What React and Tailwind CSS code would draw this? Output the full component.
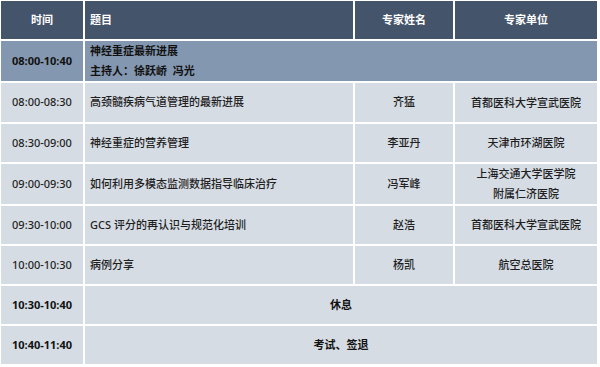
import { Fragment } from "react";

const rows = [
  { time: "08:00-08:30", topic: "高颈髓疾病气道管理的最新进展", name: "齐猛", unit: ["首都医科大学宣武医院"], h: "h-[39px]" },
  { time: "08:30-09:00", topic: "神经重症的营养管理", name: "李亚丹", unit: ["天津市环湖医院"], h: "h-[38px]" },
  { time: "09:00-09:30", topic: "如何利用多模态监测数据指导临床治疗", name: "冯军峰", unit: ["上海交通大学医学院", "附属仁济医院"], h: "h-[40px]" },
  { time: "09:30-10:00", topic: "GCS 评分的再认识与规范化培训", name: "赵浩", unit: ["首都医科大学宣武医院"], h: "h-[38px]" },
  { time: "10:00-10:30", topic: "病例分享", name: "杨凯", unit: ["航空总医院"], h: "h-[38px]" },
];

const cell = "bg-[#d6dce4] flex items-center text-[11px] font-medium text-[#1f1f1f]";
const brk = "bg-[#d6dce4] h-[38px] flex items-center justify-center text-[11px] font-bold text-[#111]";
const head = "h-[38px] bg-[#44546a] flex items-center text-[11px] font-bold text-white";

export default function App() {
  return (
    <div
      className="w-[600px] h-[367px] bg-white overflow-hidden"
      style={{ fontFamily: '"Noto Sans", "Noto Sans CJK SC", sans-serif' }}
    >
      <div className="grid grid-cols-[82px_268px_98px_142px] gap-[2px] p-px">
        {/* header */}
        <div className={`${head} justify-center`}>时间</div>
        <div className={`${head} px-[5px]`}>题目</div>
        <div className={`${head} justify-center`}>专家姓名</div>
        <div className={`${head} justify-center`}>专家单位</div>

        {/* session */}
        <div className="h-[40px] bg-[#8497b0] flex items-center justify-center text-[11px] font-bold text-[#111]">08:00-10:40</div>
        <div className="col-span-3 h-[40px] bg-[#8497b0] flex flex-col justify-center px-[5px] text-[11px] font-bold text-[#111] leading-[20px]">
          <span>神经重症最新进展</span>
          <span>主持人：徐跃峤&nbsp;&nbsp;冯光</span>
        </div>

        {rows.map((r) => (
          <Fragment key={r.time}>
            <div className={`${cell} ${r.h} justify-center`}>{r.time}</div>
            <div className={`${cell} ${r.h} px-[5px]`}>{r.topic}</div>
            <div className={`${cell} ${r.h} justify-center`}>{r.name}</div>
            <div className={`${cell} ${r.h} flex-col justify-center leading-[20px]`}>
              {r.unit.map((u) => (
                <span key={u}>{u}</span>
              ))}
            </div>
          </Fragment>
        ))}

        {/* breaks */}
        <div className={brk}>10:30-10:40</div>
        <div className={`${brk} col-span-3`}>休息</div>
        <div className={brk}>10:40-11:40</div>
        <div className={`${brk} col-span-3`}>考试、签退</div>
      </div>
    </div>
  );
}
